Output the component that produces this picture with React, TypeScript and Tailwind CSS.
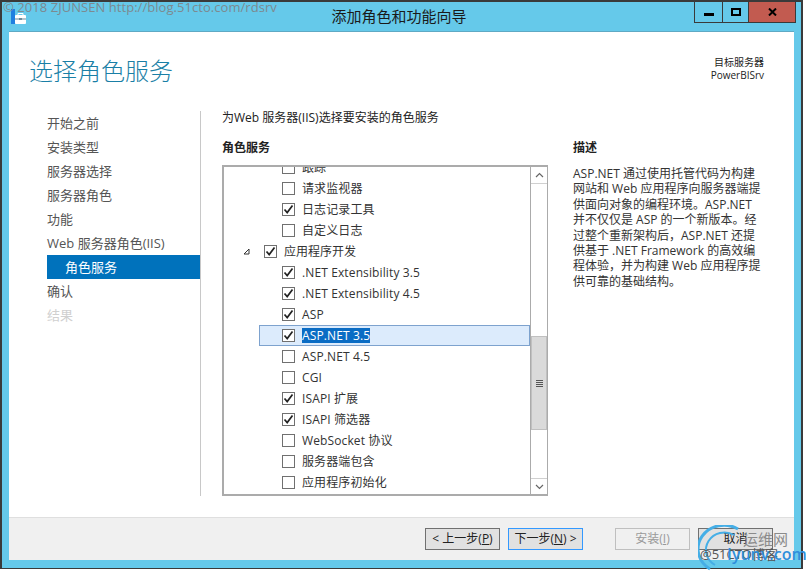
import React from "react";

const font = { fontFamily: '"Open Sans", "Noto Sans CJK SC", sans-serif' };

const steps = ["开始之前", "安装类型", "服务器选择", "服务器角色", "功能", "Web 服务器角色(IIS)"];

const rows: { label: string; checked?: boolean; level?: number; selected?: boolean }[] = [
  { label: "跟踪" },
  { label: "请求监视器" },
  { label: "日志记录工具", checked: true },
  { label: "自定义日志" },
  { label: "应用程序开发", checked: true, level: 1 },
  { label: ".NET Extensibility 3.5", checked: true },
  { label: ".NET Extensibility 4.5", checked: true },
  { label: "ASP", checked: true },
  { label: "ASP.NET 3.5", checked: true, selected: true },
  { label: "ASP.NET 4.5" },
  { label: "CGI" },
  { label: "ISAPI 扩展", checked: true },
  { label: "ISAPI 筛选器", checked: true },
  { label: "WebSocket 协议" },
  { label: "服务器端包含" },
  { label: "应用程序初始化" },
];

const description = [
  "ASP.NET 通过使用托管代码为构建",
  "网站和 Web 应用程序向服务器端提",
  "供面向对象的编程环境。ASP.NET",
  "并不仅仅是 ASP 的一个新版本。经",
  "过整个重新架构后，ASP.NET 还提",
  "供基于 .NET Framework 的高效编",
  "程体验，并为构建 Web 应用程序提",
  "供可靠的基础结构。",
];

function Check({ checked }: { checked?: boolean }) {
  return (
    <span className="w-[13px] h-[13px] border border-[#707070] bg-white shrink-0 flex items-center justify-center">
      {checked && (
        <svg width="11" height="11" viewBox="0 0 11 11">
          <path d="M1.5 5.5 L4.2 8.6 L9.5 1.5" fill="none" stroke="#222" strokeWidth="1.7" />
        </svg>
      )}
    </span>
  );
}

function Row({ label, checked, level, selected }: (typeof rows)[number]) {
  if (level === 1) {
    return (
      <div className="h-[21px] flex items-center pl-[19px]">
        <svg width="7" height="7" viewBox="0 0 7 7" className="mr-[14px]">
          <path d="M6 1 V6 H1 Z" fill="#fff" stroke="#333" />
        </svg>
        <Check checked={checked} />
        <span className="ml-[7px] text-[12px] text-[#333]">{label}</span>
      </div>
    );
  }
  return (
    <div
      className={
        "h-[21px] flex items-center ml-[35px] " +
        (selected ? "bg-[#dcebfc] border border-[#7da2ce] pl-[22px]" : "pl-[23px]")
      }
    >
      <Check checked={checked} />
      <span
        className={
          "ml-[7px] text-[12px] tracking-[0.12px] " +
          (selected ? "bg-[#0a6cc4] text-white leading-[15px]" : "text-[#333]")
        }
      >
        {label}
      </span>
    </div>
  );
}

function Btn({ children, className }: { children: React.ReactNode; className: string }) {
  return (
    <div className={"w-[75px] h-[22px] border flex items-center justify-center text-[12px] " + className}>
      {children}
    </div>
  );
}

export default function App() {
  return (
    <div className="relative w-[806px] h-[571px] bg-white overflow-hidden" style={font}>
      <div className="w-[803px] h-[569px] border-2 border-[#3a3a3a] border-b-[1px] bg-[#65c9ea] flex flex-col">
        {/* title bar */}
        <div className="relative h-[29px] shrink-0 flex justify-center pt-[4px]">
          <span className="text-[15px] leading-[20px] text-[#1a1a1a] -ml-[5px]">添加角色和功能向导</span>
          <svg width="16" height="16" viewBox="0 0 16 16" className="absolute left-[9px] top-[7px]">
            <rect x="0" y="0" width="4" height="15" fill="#1f7fe0" />
            <rect x="4" y="6" width="11" height="9" rx="1" fill="#fff" />
            <path d="M7 6 V4.5 H12 V6" fill="none" stroke="#fff" />
            <path d="M4 10 H15" stroke="#6b8a99" />
            <rect x="8" y="9" width="3" height="2" fill="#6b8a99" />
          </svg>
          <div className="absolute right-[5px] top-0 h-[21px] flex border border-t-0 border-[#3a3a3a]">
            <div className="w-[28px] border-r border-[#3a3a3a] flex items-center justify-center">
              <span className="w-[10px] h-[3px] bg-black mt-[4px]" />
            </div>
            <div className="w-[26px] border-r border-[#3a3a3a] flex items-center justify-center">
              <span className="w-[10px] h-[8px] border-2 border-black" />
            </div>
            <div className="w-[46px] bg-[#c25b50] flex items-center justify-center">
              <svg width="9" height="8" viewBox="0 0 9 8">
                <path d="M1 0.5 L8 7.5 M8 0.5 L1 7.5" stroke="#000" strokeWidth="2" />
              </svg>
            </div>
          </div>
        </div>

        {/* dialog body */}
        <div className="mx-[7px] h-[529px] bg-white flex flex-col border-t border-[#5fa9c4]">
          <div className="h-[486px] shrink-0 flex flex-col border-b border-[#dfdfdf]">
            <div className="h-[79px] shrink-0 flex justify-between pl-[20px] pr-[30px]">
              <h1 className="text-[24px] leading-[32px] mt-[23px] font-light text-[#1a7fa6]">选择角色服务</h1>
              <div className="mt-[24px] text-right text-[#222] text-[10px] leading-[13px]">
                <div>目标服务器</div>
                <div>PowerBISrv</div>
              </div>
            </div>

            <div className="flex-1 flex pb-[21px]">
              {/* steps */}
              <div className="w-[192px] pl-[38px] border-r border-[#c8c8c8] shrink-0">
                {steps.map((s) => (
                  <div key={s} className="h-[24px] text-[13px] leading-[24px] text-[#555]">
                    {s}
                  </div>
                ))}
                <div className="h-[24px] w-[153px] bg-[#0072bc] text-white text-[13px] leading-[24px] pl-[18px]">
                  角色服务
                </div>
                <div className="h-[24px] text-[13px] leading-[24px] text-[#555]">确认</div>
                <div className="h-[24px] text-[13px] leading-[24px] text-[#d0d0d0]">结果</div>
              </div>

              {/* main */}
              <div className="flex-1 pl-[21px] flex flex-col">
                <div className="text-[12px] leading-[14px] text-[#222]">
                  为Web 服务器(IIS)选择要安装的角色服务
                </div>
                <div className="flex flex-1 mt-[15px]">
                  <div className="w-[326px] flex flex-col shrink-0">
                    <div className="text-[12px] leading-[16px] font-bold text-[#222]">角色服务</div>
                    <div className="mt-[9px] flex-1 border-2 border-[#ababab] border-r-[1px] flex overflow-hidden">
                      <div className="flex-1 overflow-hidden">
                        <div className="-mt-[10px]">
                          {rows.map((r) => (
                            <Row key={r.label} {...r} />
                          ))}
                        </div>
                      </div>
                      <div className="w-[17px] shrink-0 flex flex-col border-l border-[#ababab] bg-white">
                        <div className="h-[17px] border-b border-[#d0d0d0] flex items-center justify-center">
                          <svg width="9" height="6" viewBox="0 0 9 6">
                            <path d="M1 5 L4.5 1.5 L8 5" fill="none" stroke="#666" strokeWidth="1.2" />
                          </svg>
                        </div>
                        <div className="h-[152px]" />
                        <div className="h-[94px] bg-[#dadada] border border-[#c0c0c0] flex flex-col items-center justify-center gap-[1px]">
                          <span className="w-[7px] h-[1px] bg-[#555]" />
                          <span className="w-[7px] h-[1px] bg-[#555]" />
                          <span className="w-[7px] h-[1px] bg-[#555]" />
                          <span className="w-[7px] h-[1px] bg-[#555]" />
                        </div>
                        <div className="flex-1" />
                        <div className="h-[16px] border-t border-[#d0d0d0] flex items-center justify-center">
                          <svg width="9" height="6" viewBox="0 0 9 6">
                            <path d="M1 1 L4.5 4.5 L8 1" fill="none" stroke="#666" strokeWidth="1.2" />
                          </svg>
                        </div>
                      </div>
                    </div>
                  </div>
                  <div className="ml-[25px] text-[#222]">
                    <div className="text-[12px] leading-[16px] font-bold">描述</div>
                    <div className="mt-[10px] text-[12px] leading-[15.4px] whitespace-nowrap text-[#333]">
                      {description.map((l) => (
                        <div key={l}>{l}</div>
                      ))}
                    </div>
                  </div>
                </div>
              </div>
            </div>
          </div>

          {/* footer */}
          <div className="flex-1 bg-[#f0f0f0] flex items-start pt-[10px] pl-[416px] text-[#222]">
            <Btn className="bg-[#e1e1e1] border-[#707070]">
              &lt; 上一步(<u>P</u>)
            </Btn>
            <Btn className="bg-[#e1e1e1] border-[#3399ff] ml-[8px]">
              下一步(<u>N</u>) &gt;
            </Btn>
            <Btn className="bg-[#f0f0f0] border-[#bfbfbf] text-[#9a9a9a] ml-[32px]">
              安装(<u>I</u>)
            </Btn>
            <Btn className="bg-[#e1e1e1] border-[#707070] ml-[8px]">取消</Btn>
          </div>
        </div>
      </div>

      {/* watermarks */}
      <div className="absolute left-[3px] top-0 text-[13px] leading-[15px] tracking-[0.05px] font-medium text-[#7d8a90] whitespace-nowrap">
        © 2018 ZJUNSEN http://blog.51cto.com/rdsrv
      </div>
      <svg width="50" height="48" viewBox="0 0 50 48" className="absolute left-[698px] top-[525px]">
        <path d="M40 4 A24 22 0 0 0 12 44" fill="none" stroke="#45aee6" strokeWidth="3" />
        <path d="M36 10 A17 16 0 0 0 17 40" fill="none" stroke="#45aee6" strokeWidth="2" />
      </svg>
      <div className="absolute left-[743px] top-[530px] text-[15px] leading-[18px] text-[#8b8b8b] whitespace-nowrap">
        运维网
      </div>
      <div className="absolute left-[700px] top-[546px] text-[13px] leading-[16px] text-[#555] whitespace-nowrap">
        @51CTO博客
      </div>
      <div className="absolute left-[727px] top-[546px] text-[16px] leading-[16px] font-semibold text-[#2f8fdc] whitespace-nowrap">
        Iyunv.com
      </div>
    </div>
  );
}
